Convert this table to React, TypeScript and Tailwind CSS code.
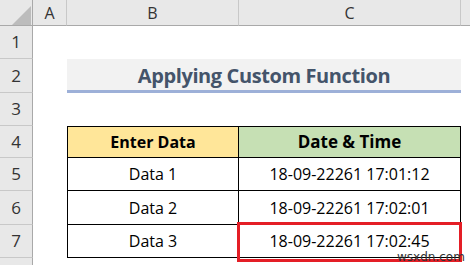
const rows = [
  { n: '5', data: 'Data 1', dt: '18-09-22261 17:01:12' },
  { n: '6', data: 'Data 2', dt: '18-09-22261 17:02:01' },
  { n: '7', data: 'Data 3', dt: '18-09-22261 17:02:45' },
];

function RowHead({ n }: { n: string }) {
  return (
    <div className="flex items-center justify-center border-r border-b border-r-[#a9a9a9] border-b-[#c8c8c8] bg-[#e8e8e8] text-[17px] text-[#333]">
      {n}
    </div>
  );
}

export default function App() {
  return (
    <div className="relative h-[265px] w-[470px] overflow-hidden bg-white font-['Open_Sans',sans-serif]">
      <div className="grid h-full grid-cols-[33px_34px_172px_222px_1fr] grid-rows-[26px_33px_34px_33px_32px_33px_34px_33px_1fr]">
        {/* column headers */}
        <div className="relative border-r border-b border-r-[#a9a9a9] border-b-[#a9a9a9] bg-[#e8e8e8]">
          <svg className="absolute left-[12px] top-[6px]" width="19" height="19" viewBox="0 0 19 19">
            <polygon points="19,0 19,19 0,19" fill="#bcbcbc" />
          </svg>
        </div>
        <div className="flex items-center justify-center border-r border-b border-r-[#c8c8c8] border-b-[#a9a9a9] bg-[#e8e8e8] text-[16px] text-[#333]">A</div>
        <div className="flex items-center justify-center border-r border-b border-r-[#c8c8c8] border-b-[#a9a9a9] bg-[#e8e8e8] text-[16px] text-[#333]">B</div>
        <div className="flex items-center justify-center border-r border-b border-r-[#c8c8c8] border-b-[#a9a9a9] bg-[#e8e8e8] text-[16px] text-[#333]">C</div>
        <div className="border-b border-b-[#a9a9a9] bg-[#e8e8e8]" />

        {/* row 1 */}
        <RowHead n="1" />
        <div className="col-span-4" />

        {/* row 2 - title */}
        <RowHead n="2" />
        <div />
        <div className="col-span-2 flex items-center justify-center border-b-[3px] border-b-[#9db0d8] bg-[#f2f2f2] pt-[2px] text-[20px] font-bold tracking-[-0.4px] text-[#44546a]">
          Applying Custom Function
        </div>
        <div />

        {/* row 3 */}
        <RowHead n="3" />
        <div className="col-span-4" />

        {/* row 4 - table header */}
        <RowHead n="4" />
        <div />
        <div className="flex items-center justify-center border border-black bg-[#ffe699] text-[16px] font-bold text-black">
          Enter Data
        </div>
        <div className="flex items-center justify-center border-y border-r border-black bg-[#c6e0b4] text-[17px] font-bold text-black">
          Date &amp; Time
        </div>
        <div />

        {rows.map((r) => (
          <div key={r.n} className="contents">
            <RowHead n={r.n} />
            <div />
            <div className="flex items-center justify-center border-x border-b border-black text-[16px] text-black">
              {r.data}
            </div>
            <div className="flex items-center justify-center border-r border-b border-black text-[16px] leading-[20px] text-black">
              {r.dt}
            </div>
            <div />
          </div>
        ))}

        {/* row 8 */}
        <div className="border-r border-r-[#a9a9a9] bg-[#e8e8e8]" />
        <div className="col-span-4" />
      </div>

      {/* highlight around C7 */}
      <div className="absolute left-[237px] top-[222px] z-10 h-[40px] w-[225px] border-[3px] border-[#e41e26]" />

      <div className="absolute left-[396px] top-[251px] z-20 px-[1px] text-[12px] leading-[12px] text-[#333] font-['DejaVu_Sans',sans-serif]">
        wsxdn.com
      </div>
    </div>
  );
}
